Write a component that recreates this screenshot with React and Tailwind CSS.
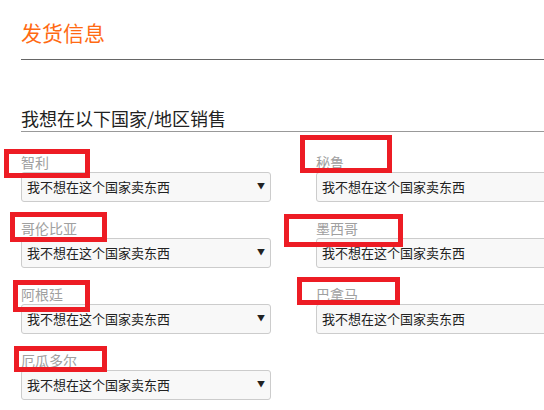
import { useState } from "react";

const countries = [
  ["智利", "秘鲁"],
  ["哥伦比亚", "墨西哥"],
  ["阿根廷", "巴拿马"],
  ["厄瓜多尔", null],
];

// annotation boxes drawn over the labels in the screenshot
const marks = [
  "left-[4px] top-[149px] w-[86px] h-[29px]",
  "left-[300px] top-[135px] w-[92px] h-[38px]",
  "left-[10px] top-[212px] w-[97px] h-[30px]",
  "left-[284px] top-[214px] w-[119px] h-[33px]",
  "left-[13px] top-[280px] w-[77px] h-[32px]",
  "left-[297px] top-[277px] w-[103px] h-[28px]",
  "left-[14px] top-[346px] w-[93px] h-[26px]",
];

function CountrySelect({ name }) {
  const [value, setValue] = useState("no");
  return (
    <div className="flex flex-col">
      <label className="h-[16px] leading-[12px] text-[14px] text-[#a0a0a0]">{name}</label>
      <div className="relative w-[250px] h-[30px]">
        <select
          value={value}
          onChange={(e) => setValue(e.target.value)}
          className="appearance-none w-full h-full bg-[#f8f8f8] border border-[#cccccc] rounded-[3px] pl-[5px] text-[13px] text-[#222] outline-none"
        >
          <option value="no">我不想在这个国家卖东西</option>
          <option value="yes">我想在这个国家卖东西</option>
        </select>
        <span className="absolute right-[6px] top-[9px] text-[8px] leading-[10px] text-[#222] pointer-events-none">▼</span>
      </div>
    </div>
  );
}

export default function App() {
  return (
    <div
      className="relative w-[544px] h-[410px] overflow-hidden bg-white"
      style={{ fontFamily: '"Noto Sans CJK SC", "Noto Sans", sans-serif' }}
    >
      <div className="pl-[21px]">
        <div className="pt-[18px] pb-[13px] border-b border-[#666]">
          <h1 className="text-[21px] leading-[28px] text-[#ff6a13]">发货信息</h1>
        </div>

        <div className="mt-[46px] pb-[1px] border-b border-[#999]">
          <h2 className="text-[18px] leading-[24px] text-[#222]">我想在以下国家/地区销售</h2>
        </div>

        <div className="mt-[24px] flex flex-col gap-[20px]">
          {countries.map(([a, b]) => (
            <div key={a} className="grid grid-cols-[295px_295px]">
              <CountrySelect name={a} />
              {b ? <CountrySelect name={b} /> : <div />}
            </div>
          ))}
        </div>
      </div>

      {marks.map((m) => (
        <div key={m} className={`absolute border-[5px] border-[#ed1c24] pointer-events-none ${m}`} />
      ))}
    </div>
  );
}
